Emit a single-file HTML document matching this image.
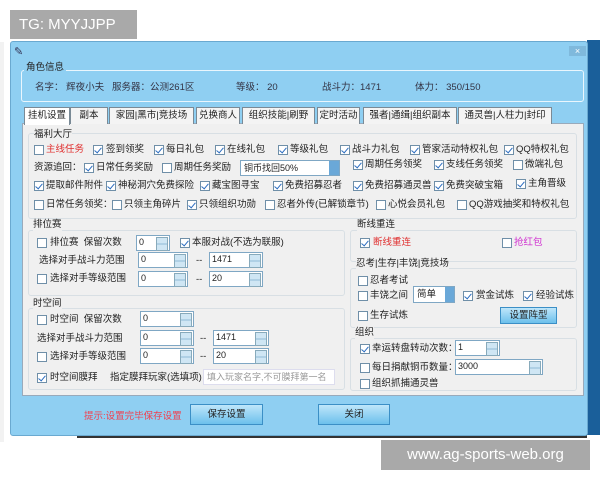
<!DOCTYPE html><html><head><meta charset="utf-8"><style>
*{margin:0;padding:0;box-sizing:border-box}
body{width:600px;height:480px;background:#fff;position:relative;overflow:hidden;font-family:"Liberation Sans","Noto Sans CJK SC",sans-serif;font-size:9.5px;color:#222}
.a{position:absolute;white-space:nowrap}
.cb{position:absolute;width:10px;height:10px;background:#fff;border:1px solid #6f8fa8}
.cb.c::after{content:"";position:absolute;left:2px;top:0px;width:3px;height:6px;border:solid #2a6cc0;border-width:0 1.5px 1.5px 0;transform:rotate(40deg)}
.t{position:absolute;white-space:nowrap;line-height:12px}
.grp{position:absolute;border:1px solid #d8dfe4;border-radius:3px}
.sp{position:absolute;height:16px;background:#fff;border:1px solid #7fa7c4;font-size:9px;padding-left:2px;line-height:12px}
.sp::after{content:"";position:absolute;right:1px;top:1px;width:10px;height:12px;background:linear-gradient(#cfe6f4 0 45%,#8fb9d6 45% 55%,#cfe6f4 55%);border:1px solid #8ab}
.btn{position:absolute;background:linear-gradient(#bfe6fa,#6cc0ec);border:1px solid #3b8fc6;text-align:center;line-height:20px}
.tab{position:absolute;top:107px;height:17px;border:1px solid #7a8a96;border-bottom:none;background:#f4f4f4;line-height:15px;text-align:center}
</style></head><body>
<div class="a" style="left:10px;top:10px;width:127px;height:29px;background:#a9a9a9;color:#fff;font-size:15px;line-height:29px;padding-left:9px">TG: MYYJJPP</div>
<div class="a" style="left:0;top:42px;width:4px;height:400px;background:#f2f2f2"></div>
<div class="a" style="left:587px;top:40px;width:13px;height:395px;background:#1a5f9a"></div>
<div class="a" style="left:77px;top:435px;width:510px;height:3px;background:#333"></div>
<div class="a" style="left:10px;top:41px;width:578px;height:395px;background:#8fcff2;border:1px solid #6aa9d0;border-radius:3px"></div>
<div class="a" style="left:14px;top:45px;color:#335;font-size:11px">✎</div>
<div class="a" style="left:569px;top:46px;width:17px;height:10px;background:#7fb9dc;color:#fff;font-size:9px;line-height:10px;text-align:center">×</div>
<div class="grp" style="left:21px;top:70px;width:563px;height:32px;border-color:#eaf6fd"></div>
<div class="t" style="left:24px;top:62px;background:#8fcff2;padding:0 2px">角色信息</div>
<div class="t" style="left:35px;top:82px;color:#334">名字： 辉夜小夫</div>
<div class="t" style="left:112px;top:82px;color:#334">服务器：公测261区</div>
<div class="t" style="left:236px;top:82px;color:#334">等级： 20</div>
<div class="t" style="left:322px;top:82px;color:#334">战斗力：1471</div>
<div class="t" style="left:415px;top:82px;color:#334">体力： 350/150</div>
<div class="a" style="left:22px;top:123px;width:562px;height:273px;background:#f0f0f0;border:1px solid #9ab"></div>
<div class="tab" style="left:24px;width:46px;background:#fff;height:18px">挂机设置</div>
<div class="tab" style="left:70px;width:38px">副本</div>
<div class="tab" style="left:109px;width:85px">家园|黑市|竞技场</div>
<div class="tab" style="left:196px;width:44px">兑换商人</div>
<div class="tab" style="left:242px;width:73px">组织技能|刷野</div>
<div class="tab" style="left:317px;width:43px">定时活动</div>
<div class="tab" style="left:363px;width:94px">强者|通缉|组织副本</div>
<div class="tab" style="left:458px;width:94px">通灵兽|人柱力|封印</div>
<div class="grp" style="left:28px;top:133px;width:549px;height:86px"></div>
<div class="t" style="left:34px;top:129px;background:#f0f0f0">福利大厅</div>
<div class="cb" style="left:34px;top:145px"></div><div class="t" style="left:46px;top:144px;color:#e03030">主线任务</div>
<div class="cb c" style="left:93px;top:145px"></div><div class="t" style="left:106px;top:144px">签到领奖</div>
<div class="cb c" style="left:154px;top:145px"></div><div class="t" style="left:166px;top:144px">每日礼包</div>
<div class="cb c" style="left:215px;top:145px"></div><div class="t" style="left:227px;top:144px">在线礼包</div>
<div class="cb c" style="left:278px;top:145px"></div><div class="t" style="left:290px;top:144px">等级礼包</div>
<div class="cb c" style="left:340px;top:145px"></div><div class="t" style="left:352px;top:144px">战斗力礼包</div>
<div class="cb c" style="left:410px;top:145px"></div><div class="t" style="left:422px;top:144px">管家活动特权礼包</div>
<div class="cb c" style="left:504px;top:145px"></div><div class="t" style="left:516px;top:144px">QQ特权礼包</div>
<div class="t" style="left:34px;top:162px">资源追回：</div>
<div class="cb c" style="left:84px;top:163px"></div><div class="t" style="left:96px;top:162px">日常任务奖励</div>
<div class="cb" style="left:162px;top:163px"></div><div class="t" style="left:174px;top:162px">周期任务奖励</div>
<div class="a" style="left:240px;top:160px;width:100px;height:16px;background:#fff;border:1px solid #7fa7c4;font-size:9px;line-height:14px;padding-left:3px">铜币找回50%</div>
<div class="a" style="left:329px;top:161px;width:10px;height:14px;background:#6aa8d8"></div>
<div class="cb c" style="left:353px;top:160px"></div><div class="t" style="left:365px;top:159px">周期任务领奖</div>
<div class="cb c" style="left:434px;top:160px"></div><div class="t" style="left:446px;top:159px">支线任务领奖</div>
<div class="cb" style="left:513px;top:160px"></div><div class="t" style="left:525px;top:159px">微端礼包</div>
<div class="cb c" style="left:34px;top:181px"></div><div class="t" style="left:46px;top:180px">提取邮件附件</div>
<div class="cb c" style="left:106px;top:181px"></div><div class="t" style="left:118px;top:180px">神秘洞穴免费探险</div>
<div class="cb c" style="left:200px;top:181px"></div><div class="t" style="left:212px;top:180px">藏宝图寻宝</div>
<div class="cb c" style="left:273px;top:181px"></div><div class="t" style="left:285px;top:180px">免费招募忍者</div>
<div class="cb c" style="left:353px;top:181px"></div><div class="t" style="left:365px;top:180px">免费招募通灵兽</div>
<div class="cb c" style="left:434px;top:181px"></div><div class="t" style="left:446px;top:180px">免费突破宝箱</div>
<div class="cb c" style="left:516px;top:179px"></div><div class="t" style="left:528px;top:178px">主角晋级</div>
<div class="cb" style="left:34px;top:200px"></div><div class="t" style="left:46px;top:199px">日常任务领奖：</div>
<div class="cb" style="left:112px;top:200px"></div><div class="t" style="left:124px;top:199px">只领主角碎片</div>
<div class="cb c" style="left:187px;top:200px"></div><div class="t" style="left:199px;top:199px">只领组织功勋</div>
<div class="cb" style="left:265px;top:200px"></div><div class="t" style="left:277px;top:199px">忍者外传(已解锁章节)</div>
<div class="cb" style="left:376px;top:200px"></div><div class="t" style="left:388px;top:199px">心悦会员礼包</div>
<div class="cb" style="left:457px;top:200px"></div><div class="t" style="left:469px;top:199px">QQ游戏抽奖和特权礼包</div>
<div class="grp" style="left:28px;top:230px;width:317px;height:66px"></div>
<div class="t" style="left:33px;top:219px;background:#f0f0f0">排位赛</div>
<div class="cb" style="left:37px;top:238px"></div><div class="t" style="left:50px;top:237px">排位赛&nbsp;&nbsp;保留次数</div>
<div class="sp" style="left:136px;top:235px;width:34px">0</div>
<div class="cb c" style="left:180px;top:238px"></div><div class="t" style="left:192px;top:237px">本服对战(不选为联服)</div>
<div class="t" style="left:39px;top:255px">选择对手战斗力范围</div>
<div class="sp" style="left:138px;top:252px;width:50px">0</div><div class="t" style="left:196px;top:255px">--</div>
<div class="sp" style="left:209px;top:252px;width:54px">1471</div>
<div class="cb" style="left:37px;top:274px"></div><div class="t" style="left:50px;top:273px">选择对手等级范围</div>
<div class="sp" style="left:138px;top:271px;width:50px">0</div><div class="t" style="left:196px;top:274px">--</div>
<div class="sp" style="left:209px;top:271px;width:54px">20</div>
<div class="grp" style="left:28px;top:308px;width:317px;height:82px"></div>
<div class="t" style="left:33px;top:298px;background:#f0f0f0">时空间</div>
<div class="cb" style="left:37px;top:315px"></div><div class="t" style="left:50px;top:314px">时空间&nbsp;&nbsp;保留次数</div>
<div class="sp" style="left:140px;top:311px;width:54px">0</div>
<div class="t" style="left:37px;top:333px">选择对手战斗力范围</div>
<div class="sp" style="left:140px;top:330px;width:54px">0</div><div class="t" style="left:200px;top:333px">--</div>
<div class="sp" style="left:213px;top:330px;width:56px">1471</div>
<div class="cb" style="left:37px;top:352px"></div><div class="t" style="left:50px;top:351px">选择对手等级范围</div>
<div class="sp" style="left:140px;top:348px;width:54px">0</div><div class="t" style="left:200px;top:351px">--</div>
<div class="sp" style="left:213px;top:348px;width:56px">20</div>
<div class="cb c" style="left:37px;top:373px"></div><div class="t" style="left:50px;top:372px">时空间膜拜</div><div class="t" style="left:110px;top:372px">指定膜拜玩家(选填项)</div>
<div class="a" style="left:203px;top:369px;width:132px;height:16px;background:#fff;border:1px solid #dde;color:#999;font-size:9px;line-height:14px;padding-left:3px">填入玩家名字,不可膜拜第一名</div>
<div class="grp" style="left:350px;top:230px;width:227px;height:32px"></div>
<div class="t" style="left:357px;top:219px;background:#f0f0f0">断线重连</div>
<div class="cb c" style="left:360px;top:238px"></div><div class="t" style="left:373px;top:237px;color:#e03030">断线重连</div>
<div class="cb" style="left:502px;top:238px"></div><div class="t" style="left:514px;top:237px;color:#d030d0">抢红包</div>
<div class="grp" style="left:350px;top:268px;width:227px;height:60px"></div>
<div class="t" style="left:356px;top:258px;background:#f0f0f0">忍考|生存|丰饶|竞技场</div>
<div class="cb" style="left:358px;top:276px"></div><div class="t" style="left:370px;top:275px">忍者考试</div>
<div class="cb" style="left:358px;top:291px"></div><div class="t" style="left:370px;top:290px">丰饶之间</div>
<div class="a" style="left:413px;top:286px;width:42px;height:17px;background:#fff;border:1px solid #7fa7c4;line-height:15px;padding-left:3px">简单</div>
<div class="a" style="left:445px;top:287px;width:9px;height:15px;background:#6aa8d8"></div>
<div class="cb c" style="left:463px;top:291px"></div><div class="t" style="left:476px;top:290px">赏金试炼</div>
<div class="cb c" style="left:523px;top:291px"></div><div class="t" style="left:536px;top:290px">经验试炼</div>
<div class="cb" style="left:358px;top:311px"></div><div class="t" style="left:370px;top:310px">生存试炼</div>
<div class="btn" style="left:500px;top:307px;width:57px;height:17px;line-height:15px">设置阵型</div>
<div class="grp" style="left:350px;top:338px;width:227px;height:53px"></div>
<div class="t" style="left:355px;top:327px;background:#f0f0f0">组织</div>
<div class="cb c" style="left:360px;top:344px"></div><div class="t" style="left:372px;top:343px">幸运转盘转动次数：</div>
<div class="sp" style="left:455px;top:340px;width:45px">1</div>
<div class="cb" style="left:360px;top:363px"></div><div class="t" style="left:372px;top:362px">每日捐献铜币数量：</div>
<div class="sp" style="left:455px;top:359px;width:88px">3000</div>
<div class="cb" style="left:360px;top:379px"></div><div class="t" style="left:372px;top:378px">组织抓捕通灵兽</div>
<div class="t" style="left:84px;top:411px;color:#f04050">提示:设置完毕保存设置</div>
<div class="btn" style="left:190px;top:404px;width:73px;height:21px">保存设置</div>
<div class="btn" style="left:318px;top:404px;width:72px;height:21px">关闭</div>
<div class="a" style="left:381px;top:440px;width:209px;height:30px;background:#a9a9a9;color:#fff;font-size:15px;line-height:30px;text-align:center">www.ag-sports-web.org</div>
</body></html>
